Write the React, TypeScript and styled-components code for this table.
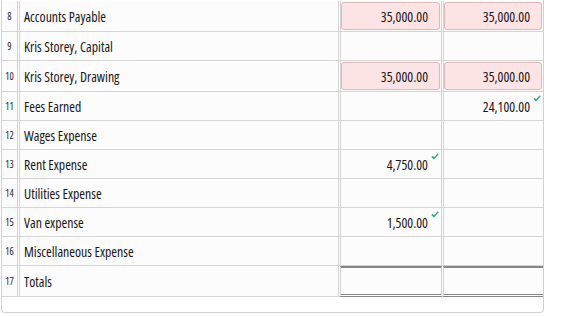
import React from 'react';
import styled, { createGlobalStyle } from 'styled-components';

const GlobalStyle = createGlobalStyle`
  body {
    margin: 0;
    background: #ffffff;
    font-family: "Open Sans", Roboto, sans-serif;
    font-stretch: 75%;
    color: #161616;
  }
`;

const Sheet = styled.div`
  width: 541px;
  margin-left: 1px;
  padding-top: 1px;
  border: 1px solid #d2d2d2;
  border-top: none;
  border-radius: 0 0 4px 4px;
  padding-bottom: 15px;
  background: #ffffff;
`;

const Row = styled.div<{ $tall?: boolean }>`
  display: grid;
  grid-template-columns: 16px 320px 102px 1fr;
  column-gap: 1px;
  height: ${({ $tall }) => ($tall ? '30px' : '28px')};
  border-bottom: 1px solid #d4d4d4;
  background: #fcfcfc;
`;

const NumCell = styled.div`
  display: flex;
  align-items: center;
  justify-content: center;
  border-right: 1px solid #d4d4d4;
  font-size: 10px;
  color: #1c1c1c;
`;

const NameCell = styled.div`
  display: flex;
  align-items: center;
  padding-left: 4px;
  border-left: 1px solid #d4d4d4;
  border-right: 1px solid #d4d4d4;
  font-size: 13.8px;
  white-space: nowrap;
`;

const AmountCell = styled.div<{ $last?: boolean; $total?: boolean }>`
  position: relative;
  display: flex;
  align-items: center;
  justify-content: flex-end;
  padding: 1px 13px 1px 0;
  border-left: 1px solid #d4d4d4;
  border-right: ${({ $last }) => ($last ? 'none' : '1px solid #d4d4d4')};
  border-top: ${({ $total }) => ($total ? '2px solid #858585' : 'none')};
  border-bottom: ${({ $total }) => ($total ? '3px double #858585' : 'none')};
  margin-bottom: ${({ $total }) => ($total ? '-1px' : '0')};
  font-size: 13.8px;
`;

const InputBox = styled.div`
  box-sizing: border-box;
  display: flex;
  align-items: center;
  justify-content: flex-end;
  width: calc(100% + 12px);
  height: 100%;
  margin-right: -12px;
  padding-right: 11px;
  border: 1px solid #dcb9b9;
  border-radius: 3px;
  background: #fde4e4;
`;

const Check = styled.svg`
  position: absolute;
  top: 3px;
  right: 2px;
  width: 8px;
  height: 7px;
`;

interface Line {
  n: number;
  name: string;
  debit?: string;
  credit?: string;
  input?: boolean;
}

const lines: Line[] = [
  { n: 8, name: 'Accounts Payable', debit: '35,000.00', credit: '35,000.00', input: true },
  { n: 9, name: 'Kris Storey, Capital' },
  { n: 10, name: 'Kris Storey, Drawing', debit: '35,000.00', credit: '35,000.00', input: true },
  { n: 11, name: 'Fees Earned', credit: '24,100.00' },
  { n: 12, name: 'Wages Expense' },
  { n: 13, name: 'Rent Expense', debit: '4,750.00' },
  { n: 14, name: 'Utilities Expense' },
  { n: 15, name: 'Van expense', debit: '1,500.00' },
  { n: 16, name: 'Miscellaneous Expense' },
];

const CheckMark = () => (
  <Check viewBox="0 0 8 7">
    <path d="M0.3 3.9 L1.6 2.7 L3 4.2 L6.9 0.3 L7.7 1.2 L3 6.6 Z" fill="#2aa884" />
  </Check>
);

const Amount: React.FC<{ value?: string; input?: boolean; last?: boolean }> = ({ value, input, last }) => {
  if (input) {
    return (
      <AmountCell $last={last}>
        <InputBox>{value}</InputBox>
      </AmountCell>
    );
  }
  return (
    <AmountCell $last={last}>
      {value}
      {value && <CheckMark />}
    </AmountCell>
  );
};

export default function App() {
  return (
    <>
      <GlobalStyle />
      <Sheet>
        {lines.map((line) => (
          <Row key={line.n} $tall={line.input}>
            <NumCell>{line.n}</NumCell>
            <NameCell>{line.name}</NameCell>
            <Amount value={line.debit} input={line.input} />
            <Amount value={line.credit} input={line.input} last />
          </Row>
        ))}
        <Row $tall>
          <NumCell>17</NumCell>
          <NameCell>Totals</NameCell>
          <AmountCell $total />
          <AmountCell $total $last />
        </Row>
      </Sheet>
    </>
  );
}
